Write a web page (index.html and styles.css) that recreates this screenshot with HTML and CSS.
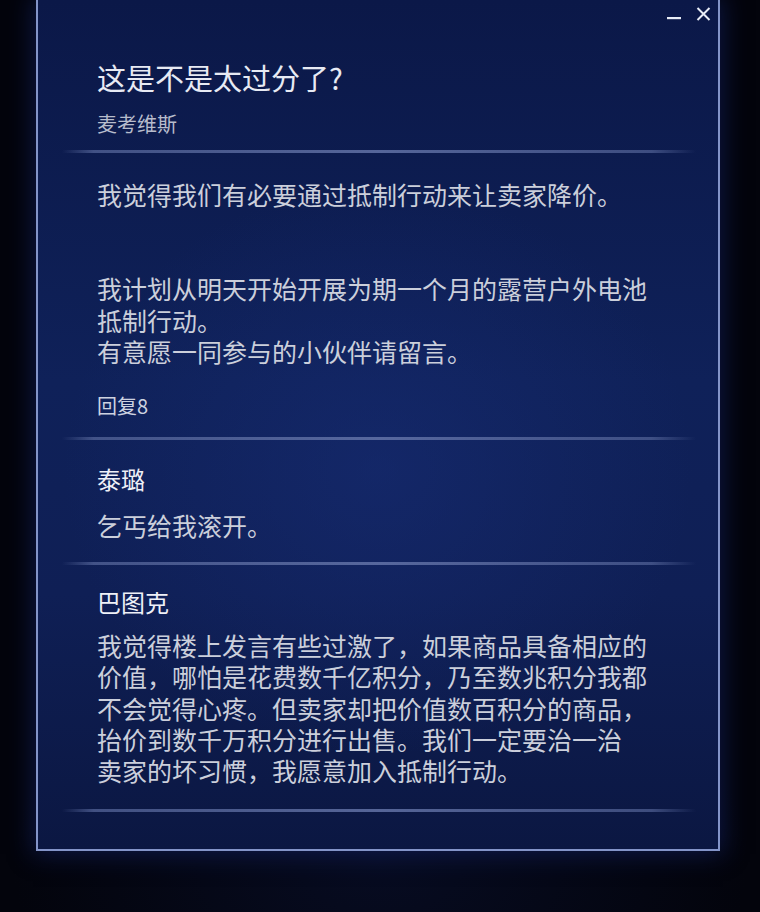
FILE: index.html
```html
<!DOCTYPE html>
<html lang="zh-CN">
<head>
<meta charset="utf-8">
<title>这是不是太过分了?</title>
<link rel="stylesheet" href="styles.css">
</head>
<body>
<div class="screen">
  <section class="panel">
    <div class="window-controls">
      <button class="ctrl ctrl-min" aria-label="最小化">
        <svg width="14" height="4" viewBox="0 0 14 4"><rect x="0" y="1" width="14" height="2.2" fill="#e8ecf6"/></svg>
      </button>
      <button class="ctrl ctrl-close" aria-label="关闭">
        <svg width="15" height="14" viewBox="0 0 15 14"><path d="M1.5 1 L13.5 13 M13.5 1 L1.5 13" stroke="#e8ecf6" stroke-width="2" stroke-linecap="butt"/></svg>
      </button>
    </div>

    <header class="thread-head">
      <h1 class="thread-title">这是不是太过分了?</h1>
      <div class="thread-author">麦考维斯</div>
    </header>

    <div class="divider"></div>

    <article class="post post-main">
      <p class="post-text">我觉得我们有必要通过抵制行动来让卖家降价。</p>
      <p class="post-text gap-2">我计划从明天开始开展为期一个月的露营户外电池<br>抵制行动。<br>有意愿一同参与的小伙伴请留言。</p>
      <div class="reply-count">回复8</div>
    </article>

    <div class="divider"></div>

    <article class="post post-reply reply-a">
      <div class="reply-name">泰璐</div>
      <p class="post-text">乞丐给我滚开。</p>
    </article>

    <div class="divider"></div>

    <article class="post post-reply reply-b">
      <div class="reply-name">巴图克</div>
      <p class="post-text">我觉得楼上发言有些过激了，如果商品具备相应的<br>价值，哪怕是花费数千亿积分，乃至数兆积分我都<br>不会觉得心疼。但卖家却把价值数百积分的商品，<br>抬价到数千万积分进行出售。我们一定要治一治<br>卖家的坏习惯，我愿意加入抵制行动。</p>
    </article>

    <div class="divider"></div>
  </section>
</div>
</body>
</html>
```

FILE: styles.css
```css
* {
  box-sizing: border-box;
}

html, body {
  margin: 0;
  padding: 0;
}

body {
  width: 760px;
  height: 912px;
  overflow: hidden;
  font-family: "Noto Sans CJK SC", "Noto Sans", sans-serif;
  background: #03040c;
}

.screen {
  height: 912px;
  padding-left: 36px;
  background:
    radial-gradient(ellipse 460px 300px at 380px 860px, rgba(10, 18, 52, 0.55), rgba(3, 4, 12, 0) 80%),
    #03040c;
}

.panel {
  width: 684px;
  border: 2px solid #8394c8;
  border-top: none;
  padding: 0 0 37px;
  background:
    radial-gradient(ellipse 420px 380px at 340px 470px, rgba(24, 46, 120, 0.5), rgba(24, 46, 120, 0) 75%),
    linear-gradient(180deg, #0b1848 0%, #0f2159 45%, #0f1f55 70%, #0b1742 100%);
  box-shadow: 0 0 22px 3px rgba(22, 40, 120, 0.5);
}

/* window controls, top-right */
.window-controls {
  height: 28px;
  display: flex;
  justify-content: flex-end;
  align-items: flex-start;
  gap: 15px;
  padding-right: 7px;
}

.ctrl {
  border: none;
  background: none;
  padding: 0;
  display: block;
  line-height: 0;
}

.ctrl-min {
  margin-top: 16px;
}

.ctrl-close {
  margin-top: 7px;
}

/* thread header */
.thread-head {
  padding-left: 59px;
}

.thread-title {
  margin: 31px 0 0;
  font-size: 29px;
  font-weight: 400;
  line-height: 36px;
  color: #e7eaf3;
}

.thread-author {
  margin-top: 15px;
  font-size: 20px;
  line-height: 28px;
  color: #b7bccc;
}

.divider {
  height: 3px;
  margin: 12px 22px 0 24px;
  background: linear-gradient(90deg,
    rgba(88, 104, 156, 0) 0%,
    rgba(88, 104, 156, 0.7) 5%,
    rgba(104, 120, 172, 0.8) 50%,
    rgba(88, 104, 156, 0.65) 93%,
    rgba(88, 104, 156, 0) 100%);
}

/* posts */
.post {
  padding-left: 59px;
  padding-right: 20px;
}

.post-text {
  margin: 0;
  font-size: 25px;
  line-height: 31.4px;
  color: #cbcfdb;
  white-space: nowrap;
}

.gap-2 {
  margin-top: 62.8px;
}

.post-main {
  padding-top: 26px;
}

.post-main + .divider {
  margin-top: 17px;
}

.reply-count {
  margin-top: 25px;
  font-size: 20px;
  line-height: 28px;
  color: #cdd2e0;
}

.reply-name {
  font-size: 24px;
  line-height: 32px;
  color: #eef0f7;
}

.reply-a {
  padding-top: 23px;
}

.reply-a .post-text {
  margin-top: 15px;
}

.reply-a + .divider {
  margin-top: 20px;
}

.reply-b {
  padding-top: 21px;
}

.reply-b .post-text {
  margin-top: 12px;
}

.reply-b + .divider {
  margin-top: 22px;
}
```
